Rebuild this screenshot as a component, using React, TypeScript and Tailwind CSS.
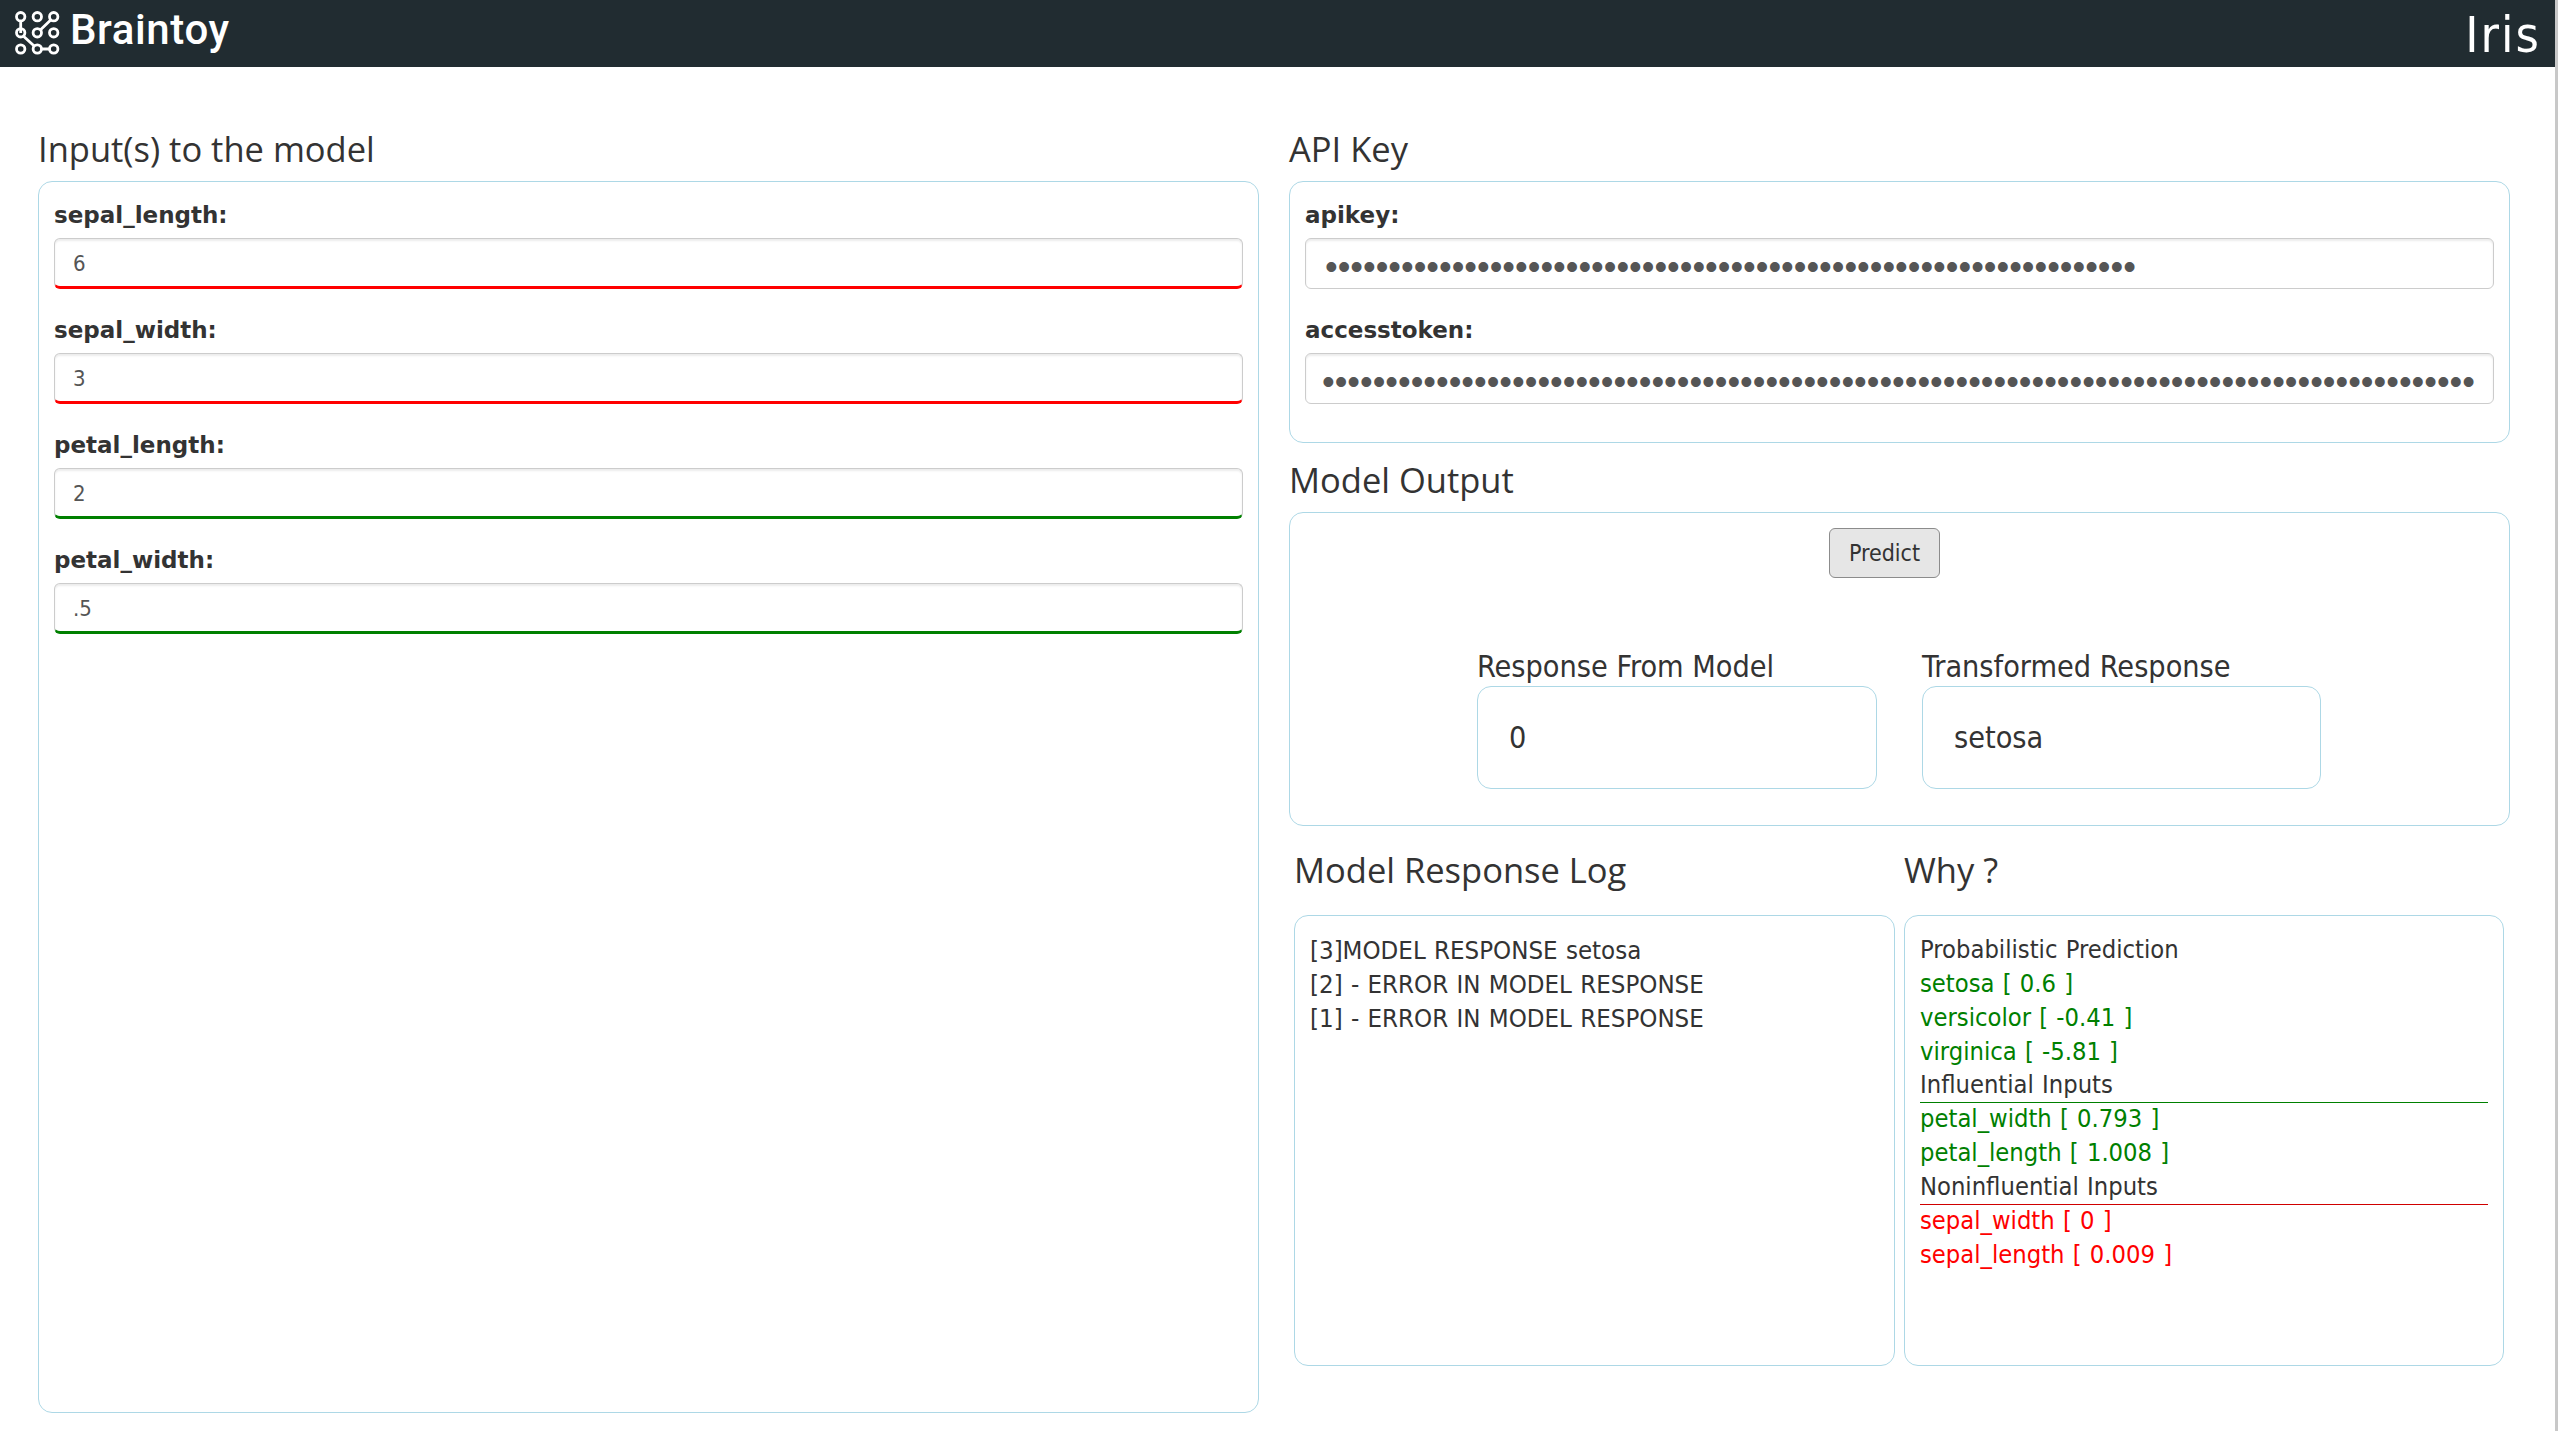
const body = '"DejaVu Sans Condensed", "DejaVu Sans", sans-serif';

function Logo() {
  return (
    <svg width="48" height="48" viewBox="0 0 48 48" fill="none" stroke="#fff" strokeWidth="2.8" className="mb-[2px] shrink-0">
      <path d="M6.7 12v12M9.8 27.5 20.2 37M36.7 11 26.3 21M27.8 40h7.6" />
      <circle cx="6.7" cy="7.7" r="4.2" /><circle cx="23.3" cy="7.7" r="4.2" /><circle cx="39.7" cy="7.7" r="4.2" />
      <circle cx="6.7" cy="23.8" r="4.2" /><circle cx="23.3" cy="23.8" r="4.2" /><circle cx="39.7" cy="23.8" r="4.2" />
      <circle cx="6.7" cy="40" r="4.2" /><circle cx="23.3" cy="40" r="4.2" /><circle cx="39.7" cy="40" r="4.2" />
    </svg>
  );
}

function Field({ label, value, line, password, inset = "px-[18px]" }: { label: string; value: string; line?: string; password?: boolean; inset?: string }) {
  const cls =
    line === "red"
      ? "border-b-[3px] border-b-[#ff0000]"
      : line === "green"
        ? "border-b-[3px] border-b-[#008000]"
        : "";
  return (
    <div className="mb-[28px] last:mb-0">
      <label className="block h-[24px] text-[23px] leading-[26px] font-bold text-[#333]" style={{ fontFamily: '"DejaVu Sans", sans-serif' }}>
        {label}
      </label>
      <input
        readOnly
        type={password ? "password" : "text"}
        value={value}
        style={password ? { fontFamily: '"Liberation Sans", sans-serif' } : undefined}
        className={`mt-[12px] block h-[51px] w-full rounded-[6px] border border-[#ccc] bg-white text-[#555] shadow-[inset_0_2px_2px_rgba(0,0,0,0.075)] outline-none ${inset} ${
          password ? "pt-[8px] text-[36.2px]" : "pt-[2px] text-[22px]"
        } ${cls}`}
      />
    </div>
  );
}

const Title = ({ children, className = "" }: { children: React.ReactNode; className?: string }) => (
  <h3 className={`h-[44px] text-[34.5px] leading-[44px] text-[#333] ${className}`} style={{ fontFamily: '"Open Sans", sans-serif' }}>
    {children}
  </h3>
);

export default function App() {
  return (
    <div className="flex h-[1431px] w-full overflow-hidden bg-white text-[#333]" style={{ fontFamily: body }}>
      <div className="min-w-0 flex-1">
        <header className="flex h-[67px] items-center justify-between bg-[#212c31] pl-[14px] pr-[14px] text-white">
          <div className="flex items-center gap-[8px]">
            <Logo />
            <span className="pb-[7px] text-[42px] leading-none font-medium tracking-[0.6px]" style={{ fontFamily: "Roboto, sans-serif" }}>Braintoy</span>
          </div>
          <span className="pt-[3px] text-[50px] leading-none tracking-[2px]">Iris</span>
        </header>
        <div className="grid grid-cols-2 gap-[30px] pl-[38px] pr-[45px] pt-[60px]">
          <section>
            <Title className="mb-[10px]">Input(s) to the model</Title>
            <div className="h-[1232px] rounded-[14px] border border-[#add8e6] px-[15px] pt-[20px]">
              <Field label="sepal_length:" value="6" line="red" />
              <Field label="sepal_width:" value="3" line="red" />
              <Field label="petal_length:" value="2" line="green" />
              <Field label="petal_width:" value=".5" line="green" />
            </div>
          </section>
          <section>
            <Title className="mb-[10px]">API Key</Title>
            <div className="h-[262px] rounded-[14px] border border-[#add8e6] px-[15px] pt-[20px]">
              <Field label="apikey:" value={"x".repeat(64)} password inset="px-[19px]" />
              <Field label="accesstoken:" value={"x".repeat(91)} password inset="px-[16px]" />
            </div>
            <Title className="mb-[10px] mt-[15px]">Model Output</Title>
            <div className="h-[314px] rounded-[14px] border border-[#add8e6]">
              <button className="ml-[539px] mt-[15px] block h-[50px] w-[111px] rounded-[6px] border border-[#8c8c8c] bg-[#e6e6e6] pt-[1px] text-[23px] text-[#333]">
                Predict
              </button>
              <div className="mt-[74px] flex gap-[45px] pl-[187px]">
                <div className="w-[400px]">
                  <div className="h-[30px] text-[30.3px] leading-[30px]">Response From Model</div>
                  <div className="mt-[4px] flex h-[103px] items-center rounded-[14px] border border-[#add8e6] pl-[31px] text-[30.3px]">0</div>
                </div>
                <div className="w-[399px]">
                  <div className="h-[30px] text-[30.3px] leading-[30px]">Transformed Response</div>
                  <div className="mt-[4px] flex h-[103px] items-center rounded-[14px] border border-[#add8e6] pl-[31px] text-[30.3px]">setosa</div>
                </div>
              </div>
            </div>
            <div className="ml-[5px] mt-[22px] grid grid-cols-[601px_600px] gap-[9px]">
              <div>
                <Title className="mb-[23px]">Model Response Log</Title>
                <div className="h-[451px] rounded-[14px] border border-[#add8e6] px-[15px] pt-[17px] text-[25.6px] leading-[34px] [word-spacing:1px]">
                  <div>[3]MODEL RESPONSE setosa</div>
                  <div>[2] - ERROR IN MODEL RESPONSE</div>
                  <div>[1] - ERROR IN MODEL RESPONSE</div>
                </div>
              </div>
              <div>
                <Title className="mb-[23px]">Why ?</Title>
                <div className="h-[451px] rounded-[14px] border border-[#add8e6] px-[15px] pt-[17px] text-[25.3px] leading-[33.85px] [word-spacing:1px]">
                  <div>Probabilistic Prediction</div>
                  <div className="text-[#008000]">setosa [ 0.6 ]</div>
                  <div className="text-[#008000]">versicolor [ -0.41 ]</div>
                  <div className="text-[#008000]">virginica [ -5.81 ]</div>
                  <div className="-mb-px border-b border-[#008000]">Influential Inputs</div>
                  <div className="text-[#008000]">petal_width [ 0.793 ]</div>
                  <div className="text-[#008000]">petal_length [ 1.008 ]</div>
                  <div className="-mb-px border-b border-[#d00000]">Noninfluential Inputs</div>
                  <div className="text-[#ff0000]">sepal_width [ 0 ]</div>
                  <div className="text-[#ff0000]">sepal_length [ 0.009 ]</div>
                </div>
              </div>
            </div>
          </section>
        </div>
      </div>
      <div className="w-[3px] shrink-0 bg-[#c8c8c8]" />
    </div>
  );
}
